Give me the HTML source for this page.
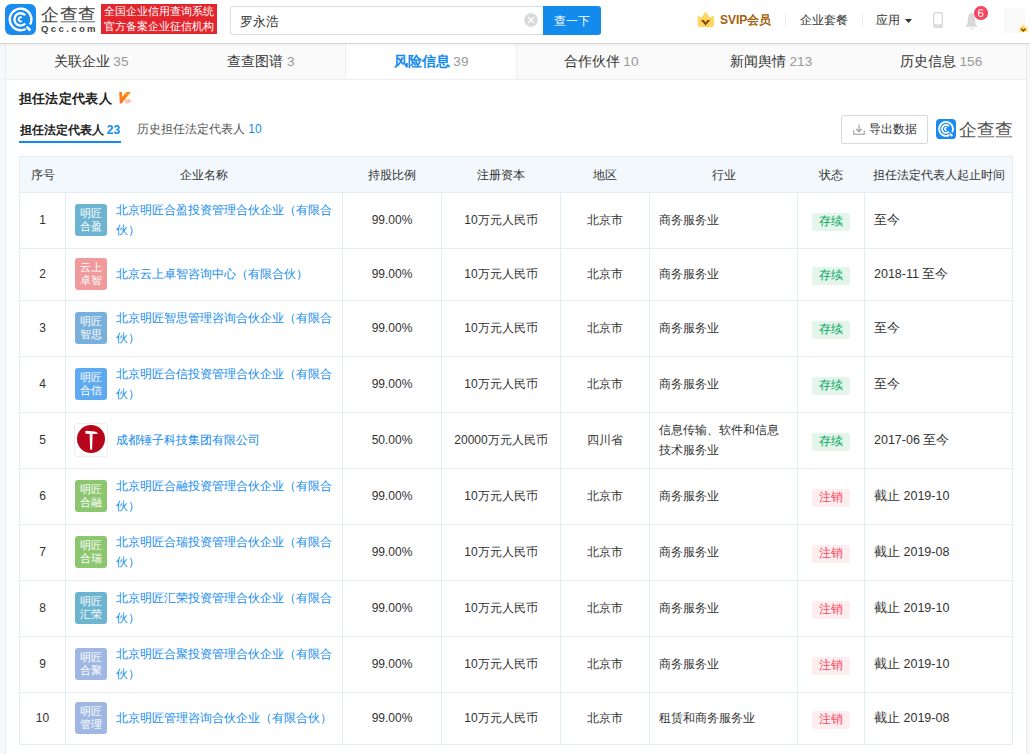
<!DOCTYPE html><html><head><meta charset="utf-8"><style>
*{box-sizing:border-box;margin:0;padding:0}
html,body{width:1030px;height:754px;overflow:hidden}
body{background:#f6f8fb;font-family:"Liberation Sans",sans-serif;color:#333;font-size:12px;position:relative}
.a{position:absolute}
.hdr{left:0;top:0;width:1030px;height:44px;background:#fff;border-bottom:1px solid #d6d6d6;}
.card{left:5px;top:44px;width:1022px;height:720px;background:#fff;border-left:1px solid #ebebeb;border-right:1px solid #ebebeb}
.nw{white-space:nowrap}
.tabs{left:6px;top:44px;width:1020px;height:36px;background:#fafafa;border-bottom:1px solid #eeeeee}
.tab{top:0;height:35px;width:170px;text-align:center;line-height:35px;font-size:13.6px;color:#333}
.tab span{color:#999}
.tab.act{background:#fff;border-left:1px solid #eee;border-right:1px solid #eee;color:#128bed}
.hl{background:#e4ecf4}
.th{background:#f2f8fc}
.cell{display:flex;align-items:center}
.ctr{justify-content:center;text-align:center}
.lnk{color:#128bed;line-height:19.5px}
.tile{width:32px;height:32px;border-radius:3px;color:#fff;font-size:11px;line-height:13px;text-align:center;padding-top:3px}
.badge{width:38px;height:18px;line-height:17px;text-align:center;border-radius:2px;font-size:12px}
.ok{background:#e4f5ec;color:#00a859}
.bad{background:#ffeef0;color:#fd4860}
</style></head><body>
<div class="a hdr"></div>
<svg class="a" style="left:5px;top:4px" width="31" height="31" viewBox="0 0 31 31">
<rect width="31" height="31" rx="6" fill="#1a8cf0"/>
<g fill="none" stroke="#fff" stroke-width="2.4" stroke-linecap="butt">
<path d="M25.14 20.47 A10.8 10.8 0 1 0 20.67 24.94"/>
<path d="M20.21 11.25 A6.2 6.2 0 1 0 20.21 19.55"/>
<path d="M16.75 13.76 A2.0 2.0 0 1 0 16.75 17.04" stroke-width="1.9"/>
<path d="M21.6 22.6 L25.3 26.5" stroke-width="2.6"/>
</g></svg>
<div class="a nw" style="left:41px;top:2.5px;font-size:17.5px;line-height:24px;color:#444;letter-spacing:0.5px">企查查</div>
<div class="a nw" style="left:41px;top:23px;font-size:9.5px;line-height:11px;color:#444;font-weight:bold;letter-spacing:2.4px">Qcc.com</div>
<div class="a" style="left:101px;top:4px;width:116px;height:30px;background:#e3262e"></div>
<div class="a nw" style="left:104px;top:4px;font-size:10.75px;line-height:15px;color:#fff">全国企业信用查询系统<br>官方备案企业征信机构</div>
<div class="a" style="left:230px;top:6px;width:314px;height:29px;border:1px solid #dcdcdc;border-radius:3px 0 0 3px;background:#fff"></div>
<div class="a nw" style="left:240px;top:6.5px;line-height:29px;font-size:12.8px;color:#333">罗永浩</div>
<svg class="a" style="left:524px;top:13px" width="14" height="14" viewBox="0 0 14 14"><circle cx="7" cy="7" r="6.8" fill="#d9d9d9"/><path d="M4.3 4.3 L9.7 9.7 M9.7 4.3 L4.3 9.7" stroke="#fff" stroke-width="1.3"/></svg>
<div class="a nw" style="left:543px;top:6px;width:58px;height:29px;background:#128bed;border-radius:0 3px 3px 0;color:#fff;font-size:12px;line-height:31px;text-align:center">查一下</div>
<svg class="a" style="left:694px;top:8px" width="24" height="24" viewBox="0 0 24 24">
<path d="M3.8 8.4 Q3.9 7.5 4.7 8 L7.4 9.8 L10.9 4.6 Q11.6 3.7 12.3 4.6 L15.9 9.8 L18.9 8 Q19.8 7.5 19.9 8.4 L19.9 17.2 Q19.9 18.9 18.1 18.9 L5.6 18.9 Q3.8 18.9 3.8 17.2 Z" fill="#ffd55e"/>
<path d="M7 12.1 L9.7 12.1 L11.6 14.5 L13.5 12.1 L16.2 12.1 L11.6 17.6 Z" fill="#7a4600"/></svg>
<div class="a nw" style="left:720px;top:10px;line-height:20px;font-size:12px;font-weight:bold;color:#a5600c">SVIP会员</div>
<div class="a" style="left:785px;top:14px;width:1px;height:12px;background:#eaeaea"></div>
<div class="a nw" style="left:800px;top:9.5px;line-height:20px;font-size:12.3px;color:#333">企业套餐</div>
<div class="a" style="left:862px;top:14px;width:1px;height:12px;background:#eaeaea"></div>
<div class="a nw" style="left:876px;top:9.5px;line-height:20px;font-size:12.4px;color:#333">应用</div>
<svg class="a" style="left:905px;top:19px" width="7" height="4" viewBox="0 0 7 4"><path d="M0 0 L7 0 L3.5 4 Z" fill="#333"/></svg>
<svg class="a" style="left:933px;top:12px" width="10" height="16" viewBox="0 0 10 16"><rect x="0.7" y="0.7" width="8.6" height="14.6" rx="1.6" fill="none" stroke="#d9d9d9" stroke-width="1.4"/><rect x="0.7" y="12.2" width="8.6" height="3.1" rx="1.2" fill="#d9d9d9"/><path d="M3.5 13.8 H6.5" stroke="#eee" stroke-width="0.9"/></svg>
<svg class="a" style="left:964px;top:12px" width="15" height="18" viewBox="0 0 15 18"><path d="M7.5 0.8 C5.5 0.8 4.2 3 4 6 L3.6 11 Q3.2 13.2 1 14.8 L14 14.8 Q11.8 13.2 11.4 11 L11 6 C10.8 3 9.5 0.8 7.5 0.8 Z" fill="#d9d9d9"/><rect x="6.2" y="16" width="2.6" height="1.3" fill="#d9d9d9"/></svg>
<div class="a" style="left:974px;top:6px;width:13.5px;height:13.5px;border-radius:50%;background:#f5455f;color:#fff;font-size:11.5px;line-height:14px;text-align:center">6</div>
<div class="a" style="left:1004px;top:8px;width:21px;height:25px;background:#fafafa"></div>
<svg class="a" style="left:1017px;top:22px" width="13" height="13" viewBox="0 0 24 24">
<path d="M3.8 8.4 Q3.9 7.5 4.7 8 L7.4 9.8 L10.9 4.6 Q11.6 3.7 12.3 4.6 L15.9 9.8 L18.9 8 Q19.8 7.5 19.9 8.4 L19.9 17.2 Q19.9 18.9 18.1 18.9 L5.6 18.9 Q3.8 18.9 3.8 17.2 Z" fill="#ffd55e" stroke="#fff" stroke-width="1.5"/>
<path d="M7.9 12.6 L11.6 16.4 L15.3 12.6" fill="none" stroke="#7a4600" stroke-width="2.6"/></svg>
<div class="a card"></div>
<div class="a tabs">
<div class="a tab" style="left:0px">关联企业 <span>35</span></div>
<div class="a tab" style="left:170px">查查图谱 <span>3</span></div>
<div class="a tab act" style="left:339px;width:172px"><b>风险信息</b> <span>39</span></div>
<div class="a tab" style="left:510px">合作伙伴 <span>10</span></div>
<div class="a tab" style="left:680px">新闻舆情 <span>213</span></div>
<div class="a tab" style="left:850px">历史信息 <span>156</span></div>
</div>
<div class="a" style="left:0;top:44px;width:1030px;height:3px;background:linear-gradient(rgba(0,0,0,.045),rgba(0,0,0,0))"></div>
<div class="a nw" style="left:18.5px;top:88.5px;font-size:13.4px;letter-spacing:0.4px;line-height:20px;font-weight:bold;color:#222">担任法定代表人</div>
<svg class="a" style="left:115px;top:88px" width="20" height="20" viewBox="0 0 20 20">
<defs><linearGradient id="vg" x1="1" y1="0" x2="0" y2="1"><stop offset="0" stop-color="#ff9a10"/><stop offset="1" stop-color="#ff6a1e"/></linearGradient></defs>
<path d="M4.2 4 L7.2 4 L7.0 9.0 L11.4 4 L16 4 L6.5 15.5 L4.8 15.5 Z" fill="url(#vg)"/>
<path d="M10.4 11.2 H11.6 V15.4 H10.4 Z M12.3 11.2 H14.3 Q15.9 11.2 15.9 12.8 Q15.9 14.3 14.3 14.3 H13.5 V15.4 H12.3 Z M13.5 12.2 V13.3 H14.1 Q14.7 13.3 14.7 12.75 Q14.7 12.2 14.1 12.2 Z" fill="#ffae7c" fill-rule="evenodd"/></svg>
<div class="a nw" style="left:19.5px;top:120px;font-size:12px;line-height:20px;font-weight:bold;color:#222">担任法定代表人 <span style="color:#128bed">23</span></div>
<div class="a" style="left:19px;top:141px;width:102px;height:2px;background:#128bed"></div>
<div class="a nw" style="left:137px;top:119px;font-size:12px;line-height:20px;color:#555">历史担任法定代表人 <span style="color:#128bed">10</span></div>
<div class="a" style="left:841px;top:115px;width:87px;height:29px;border:1px solid #d9d9d9;border-radius:2px;background:#fff"></div>
<svg class="a" style="left:853px;top:124px" width="12" height="11" viewBox="0 0 12 11"><path d="M6 0.5 V7.5 M3.2 4.8 L6 7.6 L8.8 4.8 M0.8 6.5 V10.2 H11.2 V6.5" fill="none" stroke="#999" stroke-width="1.1"/></svg>
<div class="a nw" style="left:869px;top:119px;font-size:12px;line-height:20px;color:#333">导出数据</div>
<svg class="a" style="left:936px;top:119px" width="20" height="20" viewBox="0 0 31 31">
<rect width="31" height="31" rx="6" fill="#1a8cf0"/>
<g fill="none" stroke="#fff" stroke-width="2.8">
<path d="M25.14 20.47 A10.8 10.8 0 1 0 20.67 24.94"/>
<path d="M20.21 11.25 A6.2 6.2 0 1 0 20.21 19.55"/>
<path d="M16.75 13.76 A2.0 2.0 0 1 0 16.75 17.04" stroke-width="2.2"/>
<path d="M21.6 22.6 L25.3 26.5" stroke-width="3"/>
</g></svg>
<div class="a nw" style="left:959px;top:117px;font-size:18.3px;line-height:26px;color:#555">企查查</div>
<div class="a th" style="left:19px;top:156px;width:994px;height:36px"></div>
<div class="a hl" style="left:19px;top:156px;width:994px;height:1px"></div>
<div class="a hl" style="left:19px;top:192px;width:994px;height:1px"></div>
<div class="a hl" style="left:19px;top:248px;width:994px;height:1px"></div>
<div class="a hl" style="left:19px;top:300px;width:994px;height:1px"></div>
<div class="a hl" style="left:19px;top:356px;width:994px;height:1px"></div>
<div class="a hl" style="left:19px;top:412px;width:994px;height:1px"></div>
<div class="a hl" style="left:19px;top:468px;width:994px;height:1px"></div>
<div class="a hl" style="left:19px;top:524px;width:994px;height:1px"></div>
<div class="a hl" style="left:19px;top:580px;width:994px;height:1px"></div>
<div class="a hl" style="left:19px;top:636px;width:994px;height:1px"></div>
<div class="a hl" style="left:19px;top:692px;width:994px;height:1px"></div>
<div class="a hl" style="left:19px;top:744px;width:994px;height:1px"></div>
<div class="a hl" style="left:19px;top:156px;width:1px;height:589px"></div>
<div class="a hl" style="left:65px;top:192px;width:1px;height:553px"></div>
<div class="a hl" style="left:342px;top:192px;width:1px;height:553px"></div>
<div class="a hl" style="left:441px;top:192px;width:1px;height:553px"></div>
<div class="a hl" style="left:560px;top:192px;width:1px;height:553px"></div>
<div class="a hl" style="left:649px;top:192px;width:1px;height:553px"></div>
<div class="a hl" style="left:797px;top:192px;width:1px;height:553px"></div>
<div class="a hl" style="left:864px;top:192px;width:1px;height:553px"></div>
<div class="a hl" style="left:1012px;top:156px;width:1px;height:589px"></div>
<div class="a cell ctr nw" style="left:20px;top:158px;width:45px;height:35px">序号</div>
<div class="a cell ctr nw" style="left:66px;top:158px;width:276px;height:35px">企业名称</div>
<div class="a cell ctr nw" style="left:343px;top:158px;width:98px;height:35px">持股比例</div>
<div class="a cell ctr nw" style="left:442px;top:158px;width:118px;height:35px">注册资本</div>
<div class="a cell ctr nw" style="left:561px;top:158px;width:88px;height:35px">地区</div>
<div class="a cell ctr nw" style="left:650px;top:158px;width:147px;height:35px">行业</div>
<div class="a cell ctr nw" style="left:798px;top:158px;width:66px;height:35px">状态</div>
<div class="a cell ctr nw" style="left:865px;top:158px;width:147px;height:35px">担任法定代表人起止时间</div>
<div class="a cell ctr nw" style="left:20px;top:193px;width:45px;height:55px;margin-top:-1px">1</div>
<div class="a tile nw" style="left:75px;top:204px;background:#6cb4cf">明匠<br>合盈</div>
<div class="a lnk cell nw" style="left:116px;top:193px;width:220px;height:55px"><div>北京明匠合盈投资管理合伙企业（有限合<br>伙）</div></div>
<div class="a cell ctr nw" style="left:343px;top:193px;width:98px;height:55px;margin-top:-1px">99.00%</div>
<div class="a cell ctr nw" style="left:442px;top:193px;width:118px;height:55px;">10万元人民币</div>
<div class="a cell ctr nw" style="left:561px;top:193px;width:88px;height:55px;">北京市</div>
<div class="a cell nw" style="left:659px;top:193px;width:140px;height:55px;line-height:19.5px"><div>商务服务业</div></div>
<div class="a badge ok nw" style="left:812px;top:213px">存续</div>
<div class="a cell nw" style="left:874px;top:193px;width:140px;height:55px;font-size:12.5px">至今</div>
<div class="a cell ctr nw" style="left:20px;top:249px;width:45px;height:51px;margin-top:-1px">2</div>
<div class="a tile nw" style="left:75px;top:258px;background:#f09a9b">云上<br>卓智</div>
<div class="a lnk cell nw" style="left:116px;top:249px;width:220px;height:51px"><div>北京云上卓智咨询中心（有限合伙）</div></div>
<div class="a cell ctr nw" style="left:343px;top:249px;width:98px;height:51px;margin-top:-1px">99.00%</div>
<div class="a cell ctr nw" style="left:442px;top:249px;width:118px;height:51px;">10万元人民币</div>
<div class="a cell ctr nw" style="left:561px;top:249px;width:88px;height:51px;">北京市</div>
<div class="a cell nw" style="left:659px;top:249px;width:140px;height:51px;line-height:19.5px"><div>商务服务业</div></div>
<div class="a badge ok nw" style="left:812px;top:267px">存续</div>
<div class="a cell nw" style="left:874px;top:249px;width:140px;height:51px;font-size:12.5px">2018-11 至今</div>
<div class="a cell ctr nw" style="left:20px;top:301px;width:45px;height:55px;margin-top:-1px">3</div>
<div class="a tile nw" style="left:75px;top:312px;background:#78afdb">明匠<br>智思</div>
<div class="a lnk cell nw" style="left:116px;top:301px;width:220px;height:55px"><div>北京明匠智思管理咨询合伙企业（有限合<br>伙）</div></div>
<div class="a cell ctr nw" style="left:343px;top:301px;width:98px;height:55px;margin-top:-1px">99.00%</div>
<div class="a cell ctr nw" style="left:442px;top:301px;width:118px;height:55px;">10万元人民币</div>
<div class="a cell ctr nw" style="left:561px;top:301px;width:88px;height:55px;">北京市</div>
<div class="a cell nw" style="left:659px;top:301px;width:140px;height:55px;line-height:19.5px"><div>商务服务业</div></div>
<div class="a badge ok nw" style="left:812px;top:321px">存续</div>
<div class="a cell nw" style="left:874px;top:301px;width:140px;height:55px;font-size:12.5px">至今</div>
<div class="a cell ctr nw" style="left:20px;top:357px;width:45px;height:55px;margin-top:-1px">4</div>
<div class="a tile nw" style="left:75px;top:368px;background:#5eaaf0">明匠<br>合信</div>
<div class="a lnk cell nw" style="left:116px;top:357px;width:220px;height:55px"><div>北京明匠合信投资管理合伙企业（有限合<br>伙）</div></div>
<div class="a cell ctr nw" style="left:343px;top:357px;width:98px;height:55px;margin-top:-1px">99.00%</div>
<div class="a cell ctr nw" style="left:442px;top:357px;width:118px;height:55px;">10万元人民币</div>
<div class="a cell ctr nw" style="left:561px;top:357px;width:88px;height:55px;">北京市</div>
<div class="a cell nw" style="left:659px;top:357px;width:140px;height:55px;line-height:19.5px"><div>商务服务业</div></div>
<div class="a badge ok nw" style="left:812px;top:377px">存续</div>
<div class="a cell nw" style="left:874px;top:357px;width:140px;height:55px;font-size:12.5px">至今</div>
<div class="a cell ctr nw" style="left:20px;top:413px;width:45px;height:55px;margin-top:-1px">5</div>
<div class="a" style="left:74px;top:423px;width:34px;height:34px;border:1px solid #eee;border-radius:3px;background:#fff"></div>
<svg class="a" style="left:77px;top:425px" width="28" height="28" viewBox="0 0 28 28"><circle cx="14" cy="14" r="14" fill="#b7051b"/><path d="M8.2 6.6 Q8.4 5.8 9.4 5.8 L17.6 6.5 Q19.6 6.8 21 8.4 L20.6 8.8 Q19 8.8 15.6 8.9 L15.1 24.3 Q14.1 25.4 13.1 24.3 L12.6 9.0 L9.2 8.7 Q8.2 8.6 8.2 7.6 Z" fill="#fff"/></svg>
<div class="a lnk cell nw" style="left:116px;top:413px;width:220px;height:55px"><div>成都锤子科技集团有限公司</div></div>
<div class="a cell ctr nw" style="left:343px;top:413px;width:98px;height:55px;margin-top:-1px">50.00%</div>
<div class="a cell ctr nw" style="left:442px;top:413px;width:118px;height:55px;">20000万元人民币</div>
<div class="a cell ctr nw" style="left:561px;top:413px;width:88px;height:55px;">四川省</div>
<div class="a cell nw" style="left:659px;top:413px;width:140px;height:55px;line-height:19.5px"><div>信息传输、软件和信息<br>技术服务业</div></div>
<div class="a badge ok nw" style="left:812px;top:433px">存续</div>
<div class="a cell nw" style="left:874px;top:413px;width:140px;height:55px;font-size:12.5px">2017-06 至今</div>
<div class="a cell ctr nw" style="left:20px;top:469px;width:45px;height:55px;margin-top:-1px">6</div>
<div class="a tile nw" style="left:75px;top:480px;background:#8cc66f">明匠<br>合融</div>
<div class="a lnk cell nw" style="left:116px;top:469px;width:220px;height:55px"><div>北京明匠合融投资管理合伙企业（有限合<br>伙）</div></div>
<div class="a cell ctr nw" style="left:343px;top:469px;width:98px;height:55px;margin-top:-1px">99.00%</div>
<div class="a cell ctr nw" style="left:442px;top:469px;width:118px;height:55px;">10万元人民币</div>
<div class="a cell ctr nw" style="left:561px;top:469px;width:88px;height:55px;">北京市</div>
<div class="a cell nw" style="left:659px;top:469px;width:140px;height:55px;line-height:19.5px"><div>商务服务业</div></div>
<div class="a badge bad nw" style="left:812px;top:489px">注销</div>
<div class="a cell nw" style="left:874px;top:469px;width:140px;height:55px;font-size:12.5px">截止 2019-10</div>
<div class="a cell ctr nw" style="left:20px;top:525px;width:45px;height:55px;margin-top:-1px">7</div>
<div class="a tile nw" style="left:75px;top:536px;background:#8cc66f">明匠<br>合瑞</div>
<div class="a lnk cell nw" style="left:116px;top:525px;width:220px;height:55px"><div>北京明匠合瑞投资管理合伙企业（有限合<br>伙）</div></div>
<div class="a cell ctr nw" style="left:343px;top:525px;width:98px;height:55px;margin-top:-1px">99.00%</div>
<div class="a cell ctr nw" style="left:442px;top:525px;width:118px;height:55px;">10万元人民币</div>
<div class="a cell ctr nw" style="left:561px;top:525px;width:88px;height:55px;">北京市</div>
<div class="a cell nw" style="left:659px;top:525px;width:140px;height:55px;line-height:19.5px"><div>商务服务业</div></div>
<div class="a badge bad nw" style="left:812px;top:545px">注销</div>
<div class="a cell nw" style="left:874px;top:525px;width:140px;height:55px;font-size:12.5px">截止 2019-08</div>
<div class="a cell ctr nw" style="left:20px;top:581px;width:45px;height:55px;margin-top:-1px">8</div>
<div class="a tile nw" style="left:75px;top:592px;background:#6cb4cf">明匠<br>汇荣</div>
<div class="a lnk cell nw" style="left:116px;top:581px;width:220px;height:55px"><div>北京明匠汇荣投资管理合伙企业（有限合<br>伙）</div></div>
<div class="a cell ctr nw" style="left:343px;top:581px;width:98px;height:55px;margin-top:-1px">99.00%</div>
<div class="a cell ctr nw" style="left:442px;top:581px;width:118px;height:55px;">10万元人民币</div>
<div class="a cell ctr nw" style="left:561px;top:581px;width:88px;height:55px;">北京市</div>
<div class="a cell nw" style="left:659px;top:581px;width:140px;height:55px;line-height:19.5px"><div>商务服务业</div></div>
<div class="a badge bad nw" style="left:812px;top:601px">注销</div>
<div class="a cell nw" style="left:874px;top:581px;width:140px;height:55px;font-size:12.5px">截止 2019-10</div>
<div class="a cell ctr nw" style="left:20px;top:637px;width:45px;height:55px;margin-top:-1px">9</div>
<div class="a tile nw" style="left:75px;top:648px;background:#9fb8e3">明匠<br>合聚</div>
<div class="a lnk cell nw" style="left:116px;top:637px;width:220px;height:55px"><div>北京明匠合聚投资管理合伙企业（有限合<br>伙）</div></div>
<div class="a cell ctr nw" style="left:343px;top:637px;width:98px;height:55px;margin-top:-1px">99.00%</div>
<div class="a cell ctr nw" style="left:442px;top:637px;width:118px;height:55px;">10万元人民币</div>
<div class="a cell ctr nw" style="left:561px;top:637px;width:88px;height:55px;">北京市</div>
<div class="a cell nw" style="left:659px;top:637px;width:140px;height:55px;line-height:19.5px"><div>商务服务业</div></div>
<div class="a badge bad nw" style="left:812px;top:657px">注销</div>
<div class="a cell nw" style="left:874px;top:637px;width:140px;height:55px;font-size:12.5px">截止 2019-10</div>
<div class="a cell ctr nw" style="left:20px;top:693px;width:45px;height:51px;margin-top:-1px">10</div>
<div class="a tile nw" style="left:75px;top:702px;background:#9fb8e3">明匠<br>管理</div>
<div class="a lnk cell nw" style="left:116px;top:693px;width:220px;height:51px"><div>北京明匠管理咨询合伙企业（有限合伙）</div></div>
<div class="a cell ctr nw" style="left:343px;top:693px;width:98px;height:51px;margin-top:-1px">99.00%</div>
<div class="a cell ctr nw" style="left:442px;top:693px;width:118px;height:51px;">10万元人民币</div>
<div class="a cell ctr nw" style="left:561px;top:693px;width:88px;height:51px;">北京市</div>
<div class="a cell nw" style="left:659px;top:693px;width:140px;height:51px;line-height:19.5px"><div>租赁和商务服务业</div></div>
<div class="a badge bad nw" style="left:812px;top:711px">注销</div>
<div class="a cell nw" style="left:874px;top:693px;width:140px;height:51px;font-size:12.5px">截止 2019-08</div>
</body></html>
